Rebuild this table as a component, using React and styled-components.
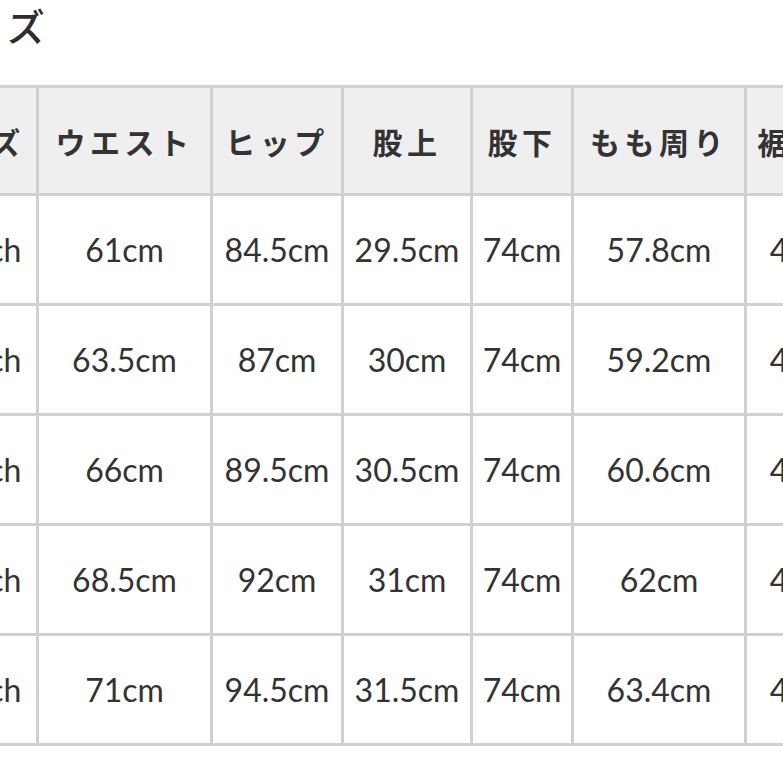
import React from "react";
import styled, { createGlobalStyle } from "styled-components";

const GlobalStyle = createGlobalStyle`
  html, body {
    margin: 0;
    padding: 0;
    background: #ffffff;
  }
  body {
    overflow: hidden;
    font-family: "Lato", "Noto Sans CJK JP", sans-serif;
  }
`;

const Viewport = styled.div`
  width: 783px;
  height: 783px;
  overflow: hidden;
  background: #ffffff;
`;

const Sheet = styled.div`
  margin-left: -92px;
  display: flex;
  flex-direction: column;
  align-items: flex-start;
`;

const Title = styled.h2`
  margin: 2px 0 0 8px;
  font-family: "Noto Sans CJK JP", sans-serif;
  font-weight: 500;
  font-size: 38px;
  line-height: 46px;
  letter-spacing: 8px;
  color: #2e2e2e;
`;

const Table = styled.table`
  margin-top: 37px;
  border-collapse: collapse;
  table-layout: fixed;
  width: 963px;
  border: 3px solid #d0d0d0;
`;

const HeadCell = styled.th`
  height: 105px;
  padding: 0;
  background: #efefef;
  border: 3px solid #d0d0d0;
  font-family: "Noto Sans CJK JP", sans-serif;
  font-weight: 700;
  font-size: 30px;
  letter-spacing: 4.5px;
  color: #333333;
  text-align: center;
  vertical-align: middle;
  white-space: nowrap;
`;

const Cell = styled.td`
  height: 107px;
  padding: 0;
  background: #ffffff;
  border: 3px solid #d0d0d0;
  font-family: "Lato", sans-serif;
  font-weight: 400;
  font-size: 32px;
  color: #333333;
  text-align: center;
  vertical-align: middle;
  white-space: nowrap;
`;

const widths = [128, 174, 131, 129, 101, 173, 127];
const headers = ["サイズ", "ウエスト", "ヒップ", "股上", "股下", "もも周り", "裾周り"];
const rows = [
  ["24inch", "61cm", "84.5cm", "29.5cm", "74cm", "57.8cm", "40cm"],
  ["25inch", "63.5cm", "87cm", "30cm", "74cm", "59.2cm", "41cm"],
  ["26inch", "66cm", "89.5cm", "30.5cm", "74cm", "60.6cm", "42cm"],
  ["27inch", "68.5cm", "92cm", "31cm", "74cm", "62cm", "43cm"],
  ["28inch", "71cm", "94.5cm", "31.5cm", "74cm", "63.4cm", "44cm"],
];

export default function App() {
  return (
    <>
      <GlobalStyle />
      <Viewport>
        <Sheet>
          <Title>サイズ</Title>
          <Table>
            <colgroup>
              {widths.map((w, i) => (
                <col key={i} style={{ width: w }} />
              ))}
            </colgroup>
            <thead>
              <tr>
                {headers.map((h) => (
                  <HeadCell key={h}>{h}</HeadCell>
                ))}
              </tr>
            </thead>
            <tbody>
              {rows.map((r, i) => (
                <tr key={i}>
                  {r.map((v, j) => (
                    <Cell key={j}>{v}</Cell>
                  ))}
                </tr>
              ))}
            </tbody>
          </Table>
        </Sheet>
      </Viewport>
    </>
  );
}
